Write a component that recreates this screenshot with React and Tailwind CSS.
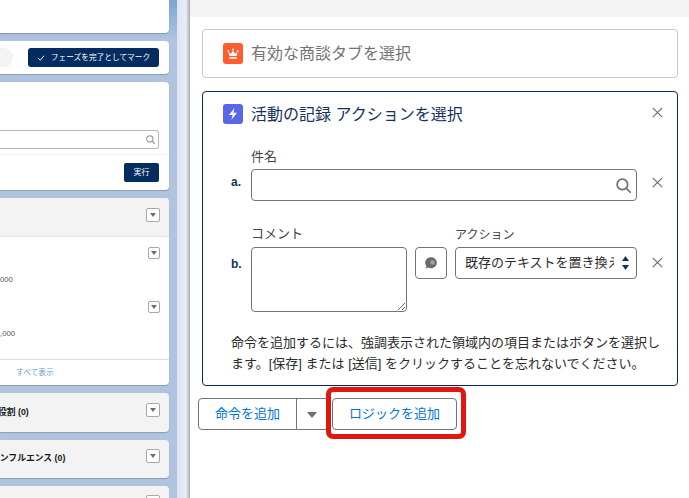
function Caret({ className = "" }) {
  return (
    <svg viewBox="0 0 10 6" className={className} fill="currentColor" preserveAspectRatio="none">
      <path d="M0 0h10L5 6z" />
    </svg>
  );
}
function Menu({ size = "lg" }) {
  return (
    <div className={"flex items-center justify-center border border-[#a8a8a8] rounded-[2px] bg-white text-[#706e6b] " + (size === "lg" ? "w-[14px] h-[14px]" : "w-[12px] h-[12px]")}>
      <Caret className="w-[6px] h-[4px]" />
    </div>
  );
}
function Close() {
  return (
    <svg viewBox="0 0 11 11" className="w-[11px] h-[11px] text-[#706e6b]" fill="none" stroke="currentColor" strokeWidth="1.2">
      <path d="M0.8 0.8l9.400 9.400M10.200 0.800L0.800 10.200" />
    </svg>
  );
}
function Search({ className = "" }) {
  return (
    <svg viewBox="0 0 16 16" className={className} fill="none" stroke="currentColor" strokeWidth="1.8">
      <circle cx="6.8" cy="6.8" r="5.6" />
      <path d="M11 11l4.200 4.200" strokeLinecap="round" />
    </svg>
  );
}
const shadow = "shadow-[0_1px_1px_rgba(0,0,0,0.2)]";
function LeftColumn() {
  return (
    <div className="w-[177px] h-full shrink-0 overflow-hidden bg-linear-to-b from-[#7ea4d5] to-[#b0c4df] to-[40px] flex flex-col gap-[8px] pr-[8px]">
      <div className={"h-[33px] shrink-0 bg-white rounded-br-[4px] " + shadow} />
      <div className={"h-[33px] shrink-0 bg-white rounded-r-[4px] flex items-center justify-between pr-[10px] " + shadow}>
        <div className="w-[13px] h-[19px] bg-[#f3f3f3] rounded-r-full" />
        <div className="w-[131px] h-[19px] bg-[#032d60] rounded-[3px] text-white flex items-center justify-center gap-[6px] text-[7.7px]">
          <svg viewBox="0 0 10 8" className="w-[8px] h-[6px]" fill="none" stroke="currentColor" strokeWidth="1.3"><path d="M1 4l3 3 5-6" /></svg>
          <span>フェーズを完了としてマーク</span>
        </div>
      </div>
      <div className={"h-[108px] shrink-0 bg-white rounded-r-[4px] flex flex-col " + shadow}>
        <div className="h-[73px] shrink-0 pt-[48px] pr-[10px] border-b border-[#f0f0f0]">
          <div className="h-[19px] border border-l-0 border-[#b8b8b8] rounded-r-[3px] flex items-center justify-end pr-[3px] text-[#8a8a8a]">
            <Search className="w-[9px] h-[9px]" />
          </div>
        </div>
        <div className="flex justify-end pr-[10px] pt-[8px]">
          <div className="w-[35px] h-[19px] bg-[#032d60] rounded-[2px] text-white text-[8px] flex items-center justify-center">実行</div>
        </div>
      </div>
      <div className={"h-[187px] shrink-0 bg-white rounded-r-[4px] flex flex-col overflow-hidden " + shadow}>
        <div className="h-[39px] shrink-0 bg-[#f3f3f3] border-b border-[#e5e5e5] flex items-start justify-end pr-[9px] pt-[10px]">
          <Menu />
        </div>
        <div className="h-[54px] shrink-0 flex flex-col items-end pr-[9px] pt-[10px]">
          <Menu size="sm" />
          <div className="mr-auto mt-[15px] text-[7.7px] text-[#555]">000</div>
        </div>
        <div className="h-[69px] shrink-0 flex flex-col items-end pr-[9px] pt-[10px] border-b border-[#dddddd]">
          <Menu size="sm" />
          <div className="mr-auto mt-[15px] text-[7.7px] text-[#555]">,000</div>
        </div>
        <div className="flex-1 pl-[16px] pt-[7px] text-[7.7px] text-[#6f9bd3]">すべて表示</div>
      </div>
      <div className={"h-[39px] shrink-0 bg-[#f3f3f3] rounded-r-[4px] flex justify-between pr-[9px] " + shadow}>
        <span className="self-center text-[8.8px] font-bold text-[#181818] -ml-[2px] whitespace-nowrap">役割 (0)</span>
        <div className="pt-[10px]"><Menu /></div>
      </div>
      <div className={"h-[38px] shrink-0 bg-[#f3f3f3] rounded-r-[4px] flex justify-between pr-[9px] " + shadow}>
        <span className="self-center text-[8.8px] font-bold text-[#181818] -ml-[9px] whitespace-nowrap">インフルエンス (0)</span>
        <div className="pt-[9px]"><Menu /></div>
      </div>
      <div className="h-[38px] shrink-0 bg-[#f3f3f3] rounded-r-[4px] flex justify-end pr-[9px] pt-[9px]">
        <Menu />
      </div>
    </div>
  );
}
function Row({ mark, children, markClass = "" }) {
  return (
    <div className="flex ml-[8px]">
      <div className={"w-[20px] shrink-0 text-[12px] font-bold text-[#16325c] " + markClass}>{mark}</div>
      <div className="flex-1 min-w-0">{children}</div>
    </div>
  );
}
export default function App() {
  return (
    <div className="w-[689px] h-[498px] overflow-hidden flex bg-white text-[#181818]" style={{ fontFamily: '"Liberation Sans","Noto Sans CJK JP",sans-serif' }}>
      <LeftColumn />
      <div className="w-[13px] h-full shrink-0 bg-[linear-gradient(to_right,#dbe5f2,#e8eef7_68%,#c8ccd2_85%,#a4a9b0)]" />
      <div className="flex-1 min-w-0 h-full flex flex-col bg-white">
        <div className="h-[17px] shrink-0 bg-[#f3f3f3]" />
        <div className="pl-[12px] pr-[11px] pt-[12px] flex flex-col">
          <div className="h-[49px] border border-[#c9c9c9] rounded-[4px] flex items-center pl-[20px] gap-[8px]">
            <div className="w-[20px] h-[21px] rounded-[3px] bg-[#ff5d2d] flex items-center justify-center">
              <svg viewBox="0 0 12 12" className="w-[12px] h-[12px]" fill="white">
                <circle cx="1.300" cy="3" r="0.900" /><circle cx="6" cy="1.500" r="0.900" /><circle cx="10.700" cy="3" r="0.900" />
                <path d="M1.500 4l2.400 1.800L6 2.600l2.100 3.200L10.500 4l-.8 4H2.300zM2.200 9.200h7.600v1.500H2.200z" />
              </svg>
            </div>
            <span className="pt-[1px] text-[16px] text-[#747474]">有効な商談タブを選択</span>
          </div>
          <div className="mt-[13px] h-[295px] border border-[#032d60] rounded-[4px] pl-[20px] pt-[12px] flex flex-col">
            <div className="flex items-center h-[20px]">
              <div className="w-[20px] h-[20px] rounded-[3px] bg-[#5867e8] flex items-center justify-center">
                <svg viewBox="0 0 12 12" className="w-[14px] h-[14px]" fill="white"><path d="M7.200 0.800L2.600 6.800h3L4.600 11.200 9.400 5h-3z" /></svg>
              </div>
              <span className="ml-[8px] pt-[2px] text-[16px] text-[#16325c]">活動の記録 アクションを選択</span>
              <div className="ml-auto w-[40px] flex justify-center -translate-y-[2px]"><Close /></div>
            </div>
            <Row mark="a." markClass="pt-[49px]">
              <div className="mt-[23px] flex">
                <div className="flex-1 min-w-0">
                  <div className="text-[13px] leading-[19px] text-[#444] mb-[3px]">件名</div>
                  <div className="h-[32px] border border-[#747474] rounded-[4px] flex items-center justify-end pr-[5px] text-[#706e6b]">
                    <Search className="w-[15px] h-[15px]" />
                  </div>
                </div>
                <div className="w-[40px] shrink-0 flex justify-center items-center pt-[17px]"><Close /></div>
              </div>
            </Row>
            <Row mark="b." markClass="pt-[54px]">
              <div className="mt-[23px] flex">
                <div className="w-[156px] shrink-0">
                  <div className="text-[13px] leading-[19px] text-[#444] mb-[4px]">コメント</div>
                  <textarea className="block w-[156px] h-[65px] border border-[#747474] rounded-[4px] bg-white outline-none" />
                </div>
                <div className="w-[32px] h-[32px] ml-[8px] mt-[23px] border border-[#747474] rounded-[4px] flex items-center justify-center text-[#6b6967]">
                  <svg viewBox="0 0 14 14" className="w-[14px] h-[14px]" fill="currentColor">
                    <path d="M7 1.200c3.200 0 5.800 2.400 5.800 5.500S10.200 12.200 7 12.200c-1 0-1.900-.2-2.700-.6L1.600 12.600l.8-2.400C1.600 9.200 1.200 8 1.200 6.700 1.200 3.600 3.800 1.200 7 1.200z" />
                    <rect x="6.500" y="4.500" width="4" height="4" rx="0.500" fill="#a5a3a0" />
                  </svg>
                </div>
                <div className="ml-[8px] flex-1 min-w-0">
                  <div className="mt-[2px] mb-[2px] text-[12px] leading-[19px] text-[#444]">アクション</div>
                  <div className="h-[32px] border border-[#747474] rounded-[4px] flex items-center justify-between pl-[9px] pr-[7px]">
                    <div className="w-[149px] overflow-hidden whitespace-nowrap text-[13px] text-[#2b2b2b]">既存のテキストを置き換える</div>
                    <div className="flex flex-col gap-[4px] text-[#16325c]">
                      <Caret className="w-[7px] h-[5px] rotate-180" />
                      <Caret className="w-[7px] h-[5px]" />
                    </div>
                  </div>
                </div>
                <div className="w-[40px] shrink-0 flex justify-center pt-[33px]"><Close /></div>
              </div>
            </Row>
            <p className="mt-[20px] ml-[8px] mr-[14px] text-[13px] leading-[21px] text-[#2b2b2b]">命令を追加するには、強調表示された領域内の項目またはボタンを選択します。[保存] または [送信] をクリックすることを忘れないでください。</p>
          </div>
          <div className="mt-[12px] -ml-[4px] flex items-start">
            <div className="h-[32px] flex border border-[#747474] rounded-[4px] w-[131px]">
              <div className="w-[98px] shrink-0 border-r border-[#747474] flex items-center justify-center text-[13px] text-[#0176d3]">命令を追加</div>
              <div className="flex-1 flex items-center justify-center text-[#706e6b] pr-[2px] pt-[1px]"><Caret className="w-[10px] h-[6px]" /></div>
            </div>
            <div className="relative ml-[3px]">
              <div className="w-[125px] h-[32px] border border-[#747474] rounded-[4px] bg-white flex items-center justify-center text-[13px] text-[#0176d3]">ロジックを追加</div>
              <div className="absolute -left-[6px] -right-[9px] -top-[11px] -bottom-[9px] border-[5px] border-[#e0170f] rounded-[7px] pointer-events-none" />
            </div>
          </div>
        </div>
      </div>
    </div>
  );
}
